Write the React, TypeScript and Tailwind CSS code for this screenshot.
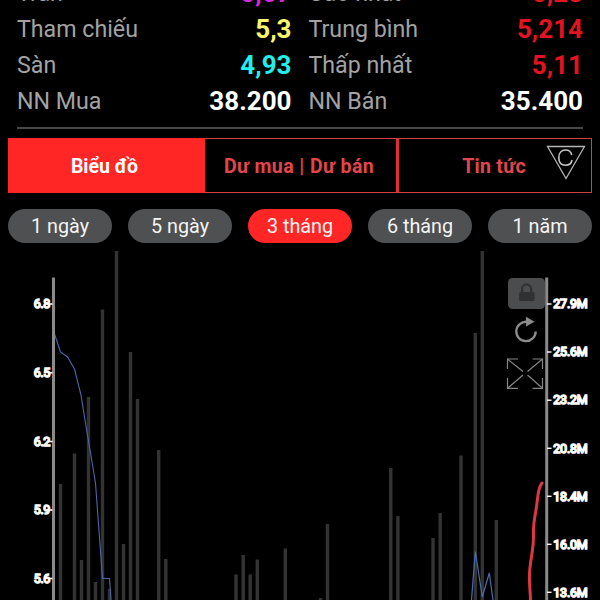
import React from "react";

type Quote = { label: string; value: string; color: string };

const left: Quote[] = [
  { label: "Trần", value: "5,67", color: "text-[#d926e0]" },
  { label: "Tham chiếu", value: "5,3", color: "text-[#fbf76a]" },
  { label: "Sàn", value: "4,93", color: "text-[#22eeea]" },
  { label: "NN Mua", value: "38.200", color: "text-white" },
];

const right: Quote[] = [
  { label: "Cao nhất", value: "5,28", color: "text-[#e3131f]" },
  { label: "Trung bình", value: "5,214", color: "text-[#e3131f]" },
  { label: "Thấp nhất", value: "5,11", color: "text-[#e3131f]" },
  { label: "NN Bán", value: "35.400", color: "text-white" },
];

const ranges = ["1 ngày", "5 ngày", "3 tháng", "6 tháng", "1 năm"];

// [x centre, top]
const bars: [number, number][] = [
  [60.5, 484], [74.5, 453.5], [81.5, 560], [88.5, 397], [95.5, 582], [102.5, 309.5], [109.5, 589],
  [116.5, 251], [123.5, 544], [130.5, 352], [137.5, 399], [158.7, 450], [165.8, 559],
  [236, 574.5], [243.2, 555], [250.2, 574.5], [257.3, 559.5], [285.3, 548.5], [320.5, 598],
  [327.5, 524], [390.8, 468], [397.9, 516], [433, 538], [440.2, 513], [461, 455.5],
  [475.3, 333], [482.3, 251], [496.3, 520],
];

const priceTicks: [string, number][] = [
  ["6.8", 304], ["6.5", 372.7], ["6.2", 441.5], ["5.9", 510], ["5.6", 578.5],
];

const volumeTicks: [string, number][] = [
  ["27.9M", 304], ["25.6M", 352], ["23.2M", 400.2], ["20.8M", 448.3], ["18.4M", 496.3], ["16.0M", 544.3], ["13.6M", 592.3],
];

function Column({ rows }: { rows: Quote[] }) {
  return (
    <div className="flex flex-1 flex-col">
      {rows.map((r) => (
        <div key={r.label} className="flex h-9 items-center justify-between">
          <span className="pt-px text-[23.2px] text-[#a3a3a3]">{r.label}</span>
          <span className={`pt-px text-[26px] font-bold ${r.color}`}>{r.value}</span>
        </div>
      ))}
    </div>
  );
}

function WarningMark() {
  return (
    <svg className="absolute top-[5px] right-[4px]" width="42" height="38" viewBox="0 0 42 38" fill="none">
      <path d="M2.5 2.5H39.5L21 34.5Z" stroke="#b5b5b5" strokeWidth="1.3" />
      <path d="M26.8 11C26 7.6 23.8 6 20.6 6C16.2 6 13.8 9.2 13.8 13.6C13.8 18.2 16.2 21.3 20.6 21.3C24 21.3 26.4 19.4 27 16" stroke="#c4c4c4" strokeWidth="1.6" />
    </svg>
  );
}

function Chart() {
  return (
    <svg className="block" width="600" height="357" viewBox="0 243 600 357" fill="none">
      {bars.map(([x, y]) => (
        <rect key={x} x={x - 1.7} y={y} width="3.4" height={600 - y} fill="#333333" />
      ))}
      <path d="M54.5 334L60.5 352L67.5 357L74.5 369L81 395L85 420L95.5 483L102.5 578.5H109.5L111 600" stroke="#5065a8" strokeWidth="1.1" />
      <path d="M471.5 600L475.3 551.5L482.3 597L489.3 573L493 600" stroke="#4a6bac" strokeWidth="1.2" />
      <path d="M542 483C538 488 538 495 537 503C535 518 533 522 533.5 534C534 550 530 559 529.5 574C529 584 530.5 592 530.5 601" stroke="#dc3742" strokeWidth="3" strokeLinecap="round" />

      <rect x="508" y="278" width="37" height="31" rx="4.5" fill="#4b4c4d" />
      <path d="M522 293V289.5C522 282.8 531.2 282.8 531.2 289.5V293" stroke="#303132" strokeWidth="2.2" />
      <rect x="519" y="292" width="15.5" height="9" rx="1.5" fill="#303132" />

      <path d="M527 321.8A9.7 9.7 0 1 0 535.7 331.5" stroke="#8c8c8c" strokeWidth="2.3" />
      <path d="M526 316.8L534.5 321.7L526 326.5Z" fill="#8c8c8c" />

      <g stroke="#858585" strokeWidth="1.2">
        <path d="M507.5 369V359H518M532.5 359H542.5V369M542.5 378V388.3H532.5M518 388.3H507.5V378" />
        <path d="M507.5 359L523 371.5M542.5 359L527.5 371.5M507.5 388.3L523 375M542.5 388.3L527.5 375" />
      </g>

      <rect x="52" y="277.5" width="3" height="323" fill="#8a8a8a" />
      <rect x="545.2" y="277.5" width="3" height="323" fill="#8a8a8a" />

      <g fill="white" stroke="white" strokeWidth="1.5" fontFamily="Roboto, sans-serif" fontSize="12.5">
        {priceTicks.map(([label, y]) => (
          <g key={label}>
            <path d={`M49 ${y}H52.5`} strokeWidth="1.6" />
            <text x="33.8" y={y + 4.2} textLength="16.6" lengthAdjust="spacing">{label}</text>
          </g>
        ))}
        {volumeTicks.map(([label, y]) => (
          <g key={label}>
            <path d={`M547 ${y}H551.5`} strokeWidth="1.4" />
            <text x="553.3" y={y + 4.2} textLength="34.4" lengthAdjust="spacing">{label}</text>
          </g>
        ))}
      </g>
    </svg>
  );
}

export default function App() {
  return (
    <div className="flex h-[600px] w-[600px] flex-col overflow-hidden bg-black font-['Roboto',sans-serif]">
      <section className="flex h-[119px] shrink-0 items-end gap-[17px] overflow-hidden pr-[17px] pl-[17px]">
        <Column rows={left} />
        <Column rows={right} />
      </section>
      <div className="mx-[17px] mt-2 h-[2px] shrink-0 bg-[#4b4747]" />

      <nav className="mx-2 mt-[9px] flex h-[55px] shrink-0 border border-[#d04044] text-[19.5px] font-bold text-[#e2464a]">
        <div className="-m-px flex w-[197px] items-center justify-center bg-[#ff2625] pt-[3px] pr-1 text-white">Biểu đồ</div>
        <div className="flex w-[195px] items-center justify-center border-r-[3px] border-[#e22d35] pt-[3px] pr-0.5 tracking-[0.42px]">Dư mua | Dư bán</div>
        <div className="relative flex flex-1 items-center justify-center pt-[3px] pr-0.5 tracking-[0.3px]">
          Tin tức
          <WarningMark />
        </div>
      </nav>

      <div className="mx-2 mt-4 flex h-[34px] shrink-0 gap-4">
        {ranges.map((r) => (
          <button
            key={r}
            className={`flex flex-1 items-center justify-center rounded-full pt-px text-[19.8px] text-[#f4f4f4] ${
              r === "3 tháng" ? "bg-[#ff2625]" : "bg-[#4f5052]"
            }`}
          >
            {r}
          </button>
        ))}
      </div>

      <Chart />
    </div>
  );
}
